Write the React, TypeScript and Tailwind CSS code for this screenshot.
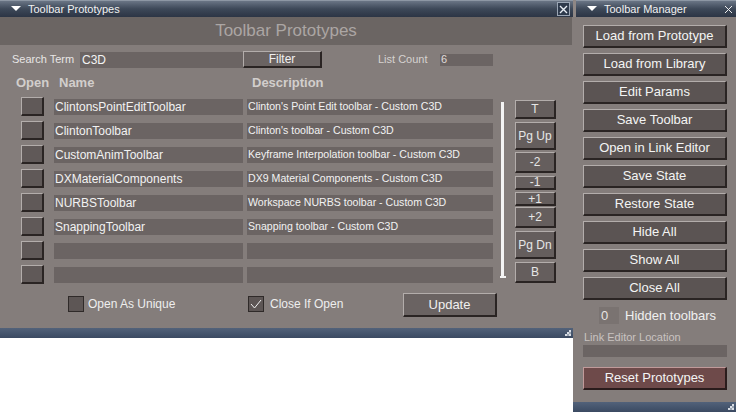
import React from 'react';

interface ProtoRow {
  name: string;
  desc: string;
}

const rows: ProtoRow[] = [
  { name: 'ClintonsPointEditToolbar', desc: "Clinton's Point Edit toolbar - Custom C3D" },
  { name: 'ClintonToolbar', desc: "Clinton's toolbar - Custom C3D" },
  { name: 'CustomAnimToolbar', desc: 'Keyframe Interpolation toolbar - Custom C3D' },
  { name: 'DXMaterialComponents', desc: 'DX9 Material Components - Custom C3D' },
  { name: 'NURBSToolbar', desc: 'Workspace NURBS toolbar - Custom C3D' },
  { name: 'SnappingToolbar', desc: 'Snapping toolbar - Custom C3D' },
  { name: '', desc: '' },
  { name: '', desc: '' },
];

const managerActions = [
  'Load from Prototype',
  'Load from Library',
  'Edit Params',
  'Save Toolbar',
  'Open in Link Editor',
  'Save State',
  'Restore State',
  'Hide All',
  'Show All',
  'Close All',
];

// raised bevel used by every push button in the panels
const bevel =
  'border-t border-l border-t-[#b3adab] border-l-[#b3adab] border-b-2 border-r-2 border-b-[#2a2423] border-r-[#2a2423]';

function DownArrow() {
  return (
    <svg width="10" height="6" viewBox="0 0 10 6" className="shrink-0">
      <polygon points="0,0 10,0 5,5" fill="#ffffff" />
    </svg>
  );
}

function Grip() {
  return (
    <svg width="6" height="6" viewBox="0 0 6 6">
      <rect x="4" y="0" width="2" height="2" fill="#d8dde4" />
      <rect x="2" y="2" width="2" height="2" fill="#d8dde4" />
      <rect x="4" y="2" width="2" height="2" fill="#9aa4b2" />
      <rect x="0" y="4" width="2" height="2" fill="#d8dde4" />
      <rect x="2" y="4" width="2" height="2" fill="#9aa4b2" />
      <rect x="4" y="4" width="2" height="2" fill="#d8dde4" />
    </svg>
  );
}

function TitleBar({ title, boxedClose }: { title: string; boxedClose?: boolean }) {
  return (
    <div className="flex items-center h-[17px] bg-gradient-to-b from-[#6a7585] via-[#3d4858] to-[#2c3545] border-t border-[#8d97a4] text-[#f2f2f2] text-[11px]">
      <div className="ml-[11px] mr-[7px] flex items-center">
        <DownArrow />
      </div>
      <span className="flex-1 leading-none">{title}</span>
      {boxedClose ? (
        <div className="mr-[3px] w-[13px] h-[14px] flex items-center justify-center border border-[#9ba6b5] bg-[#2e3a4c]">
          <svg width="9" height="9" viewBox="0 0 9 9">
            <path d="M1 1 L8 8 M8 1 L1 8" stroke="#e8eef5" strokeWidth="1.4" />
          </svg>
        </div>
      ) : (
        <div className="mr-[3px] w-[10px] h-[10px] flex items-center justify-center">
          <svg width="9" height="9" viewBox="0 0 9 9">
            <path d="M1 1 L8 8 M8 1 L1 8" stroke="#f0f0f0" strokeWidth="1" />
          </svg>
        </div>
      )}
    </div>
  );
}

function NavButton({ label, h, mt, align }: { label: string; h: string; mt: string; align?: string }) {
  return (
    <div
      className={`${h} ${mt} w-[41px] bg-[#655e5d] ${bevel} flex ${align ?? 'items-center'} justify-center text-[12px] text-[#e6e6e6] leading-none`}
    >
      {label}
    </div>
  );
}

function Checkbox({ checked }: { checked?: boolean }) {
  return (
    <div className="w-[16px] h-[16px] bg-[#5d5655] border border-[#2f2a29] flex items-center justify-center">
      {checked && (
        <svg width="12" height="10" viewBox="0 0 12 10">
          <path d="M1 5 L4.5 9 L11 1" stroke="#f0f0f0" strokeWidth="1" fill="none" />
        </svg>
      )}
    </div>
  );
}

function PrototypeWindow() {
  return (
    <div className="w-[573px] h-[338px] flex flex-col bg-[#847d7b]">
      <TitleBar title="Toolbar Prototypes" boxedClose />

      {/* heading band */}
      <div className="h-[28px] mr-[1px] bg-[#6b6563] flex items-center justify-center text-[17px] text-[#aba6a4]">
        Toolbar Prototypes
      </div>

      <div className="flex-1 flex flex-col text-[#f0f0f0]">
        {/* search row */}
        <div className="mt-[6px] h-[17px] flex items-center text-[12px]">
          <span className="pl-[12px] w-[80px] shrink-0 whitespace-nowrap text-[11px] text-[#e8e6e5]">Search Term</span>
          <div className="w-[163px] h-[16px] bg-[#6b6463] flex items-center pl-[2px] text-[#f4f4f4]">C3D</div>
          <div className={`w-[79px] h-[17px] bg-[#6a6362] ${bevel} flex items-center justify-center text-[#f0f0f0]`}>
            Filter
          </div>
          <span className="ml-[56px] w-[62px] text-[#d6d2d0] text-[11px]">List Count</span>
          <div className="w-[53px] h-[12px] bg-[#6b6463] flex items-center pl-[1px] text-[11px] text-[#e0dcdb]">6</div>
        </div>

        {/* column headings */}
        <div className="mt-[5px] h-[19px] flex items-center text-[13px] font-bold text-[#d2cecc]">
          <span className="ml-[16px] w-[43px]">Open</span>
          <span className="w-[193px]">Name</span>
          <span>Description</span>
        </div>

        {/* list with scroller */}
        <div className="mt-[5px] flex">
          <div className="w-[493px] flex flex-col gap-[5px]">
            {rows.map((r, i) => (
              <div key={i} className="h-[19px] flex items-center">
                <div className={`ml-[21px] w-[23px] h-[19px] bg-[#605958] ${bevel}`} />
                <div className="ml-[10px] w-[189px] h-[16px] bg-[#6b6463] flex items-center pl-[1px] text-[12px] text-[#f2f2f2]">
                  {r.name}
                </div>
                <div className="ml-[4px] w-[246px] h-[16px] bg-[#6b6463] flex items-center pl-[1px] text-[10.6px] text-[#f2f2f2]">
                  {r.desc}
                </div>
              </div>
            ))}
          </div>
          <div className="ml-[8px] mt-[5px] w-[6px] h-[176px] flex flex-col items-start">
            <div className="w-[3px] flex-1 bg-[#f4f4f4]" />
            <div className="w-[6px] h-[2px] bg-[#f4f4f4] -ml-[1px]" />
          </div>
          <div className="ml-[8px] mt-[3px] flex flex-col">
            <NavButton label="T" h="h-[19px]" mt="mt-0" />
            <NavButton label="Pg Up" h="h-[28px]" mt="mt-[3px]" />
            <NavButton label="-2" h="h-[21px]" mt="mt-[2px]" align="items-end pb-[3px]" />
            <NavButton label="-1" h="h-[14px]" mt="mt-[3px]" align="items-end" />
            <NavButton label="+1" h="h-[14px]" mt="mt-[2px]" align="items-start" />
            <NavButton label="+2" h="h-[21px]" mt="mt-[1px]" align="items-start pt-[3px]" />
            <NavButton label="Pg Dn" h="h-[28px]" mt="mt-[3px]" />
            <NavButton label="B" h="h-[21px]" mt="mt-[3px]" />
          </div>
        </div>

        {/* options row */}
        <div className="mt-[9px] h-[24px] flex items-center text-[12px] text-[#eeeeee]">
          <div className="ml-[68px] -mt-[3px]">
            <Checkbox />
          </div>
          <span className="ml-[4px] w-[160px] -mt-[3px]">Open As Unique</span>
          <div className="-mt-[3px]">
            <Checkbox checked />
          </div>
          <span className="ml-[6px] w-[133px] -mt-[3px]">Close If Open</span>
          <div className={`w-[94px] h-[24px] bg-[#6a6362] ${bevel} flex items-center justify-center text-[13px] text-[#f0f0f0]`}>
            Update
          </div>
        </div>
      </div>

      <div className="h-[10px] bg-gradient-to-b from-[#52627a] to-[#3b4a62] flex items-center justify-end pr-[2px]">
        <Grip />
      </div>
    </div>
  );
}

function ManagerWindow() {
  return (
    <div className="w-[163px] h-[412px] flex flex-col bg-[#847d7b]">
      <div className="pl-[3px] bg-[#8e8785]">
        <TitleBar title="Toolbar Manager" />
      </div>

      <div className="flex-1 flex flex-col pl-[10px] pt-[8px]">
        <div className="flex flex-col gap-[5px]">
          {managerActions.map(a => (
            <div
              key={a}
              className={`w-[144px] h-[23px] bg-[#5b5453] ${bevel} flex items-center justify-center text-[13px] text-[#f4f4f4]`}
            >
              {a}
            </div>
          ))}
        </div>

        <div className="mt-[7px] h-[17px] flex items-center text-[13px] text-[#f0f0f0]">
          <div className="ml-[16px] w-[20px] h-[17px] bg-[#7a7371] pl-[2px] flex items-center text-[#e8e4e3]">0</div>
          <span className="ml-[6px]">Hidden toolbars</span>
        </div>

        <div className="mt-[7px] text-[11px] leading-[12px] text-[#c9c3c1] ml-[1px]">Link Editor Location</div>
        <div className="mt-[2px] w-[144px] h-[12px] bg-[#6b6463]" />

        <div className="mt-[10px] w-[144px] h-[23px] bg-[#6e4a4a] border-t border-l border-t-[#c09a9a] border-l-[#c09a9a] border-b-2 border-r-2 border-b-[#2a1c1c] border-r-[#2a1c1c] flex items-center justify-center text-[13px] text-[#f4f4f4]">
          Reset Prototypes
        </div>
      </div>

      <div className="h-[10px] bg-gradient-to-b from-[#52627a] to-[#3b4a62] flex items-center justify-end pr-[2px]">
        <Grip />
      </div>
    </div>
  );
}

export default function App() {
  return (
    <div
      className="w-[736px] h-[412px] flex bg-white overflow-hidden"
      style={{ fontFamily: '"Liberation Sans", Arial, sans-serif' }}
    >
      <div className="w-[573px] flex flex-col">
        <PrototypeWindow />
        <div className="flex-1 bg-white" />
      </div>
      <ManagerWindow />
    </div>
  );
}
